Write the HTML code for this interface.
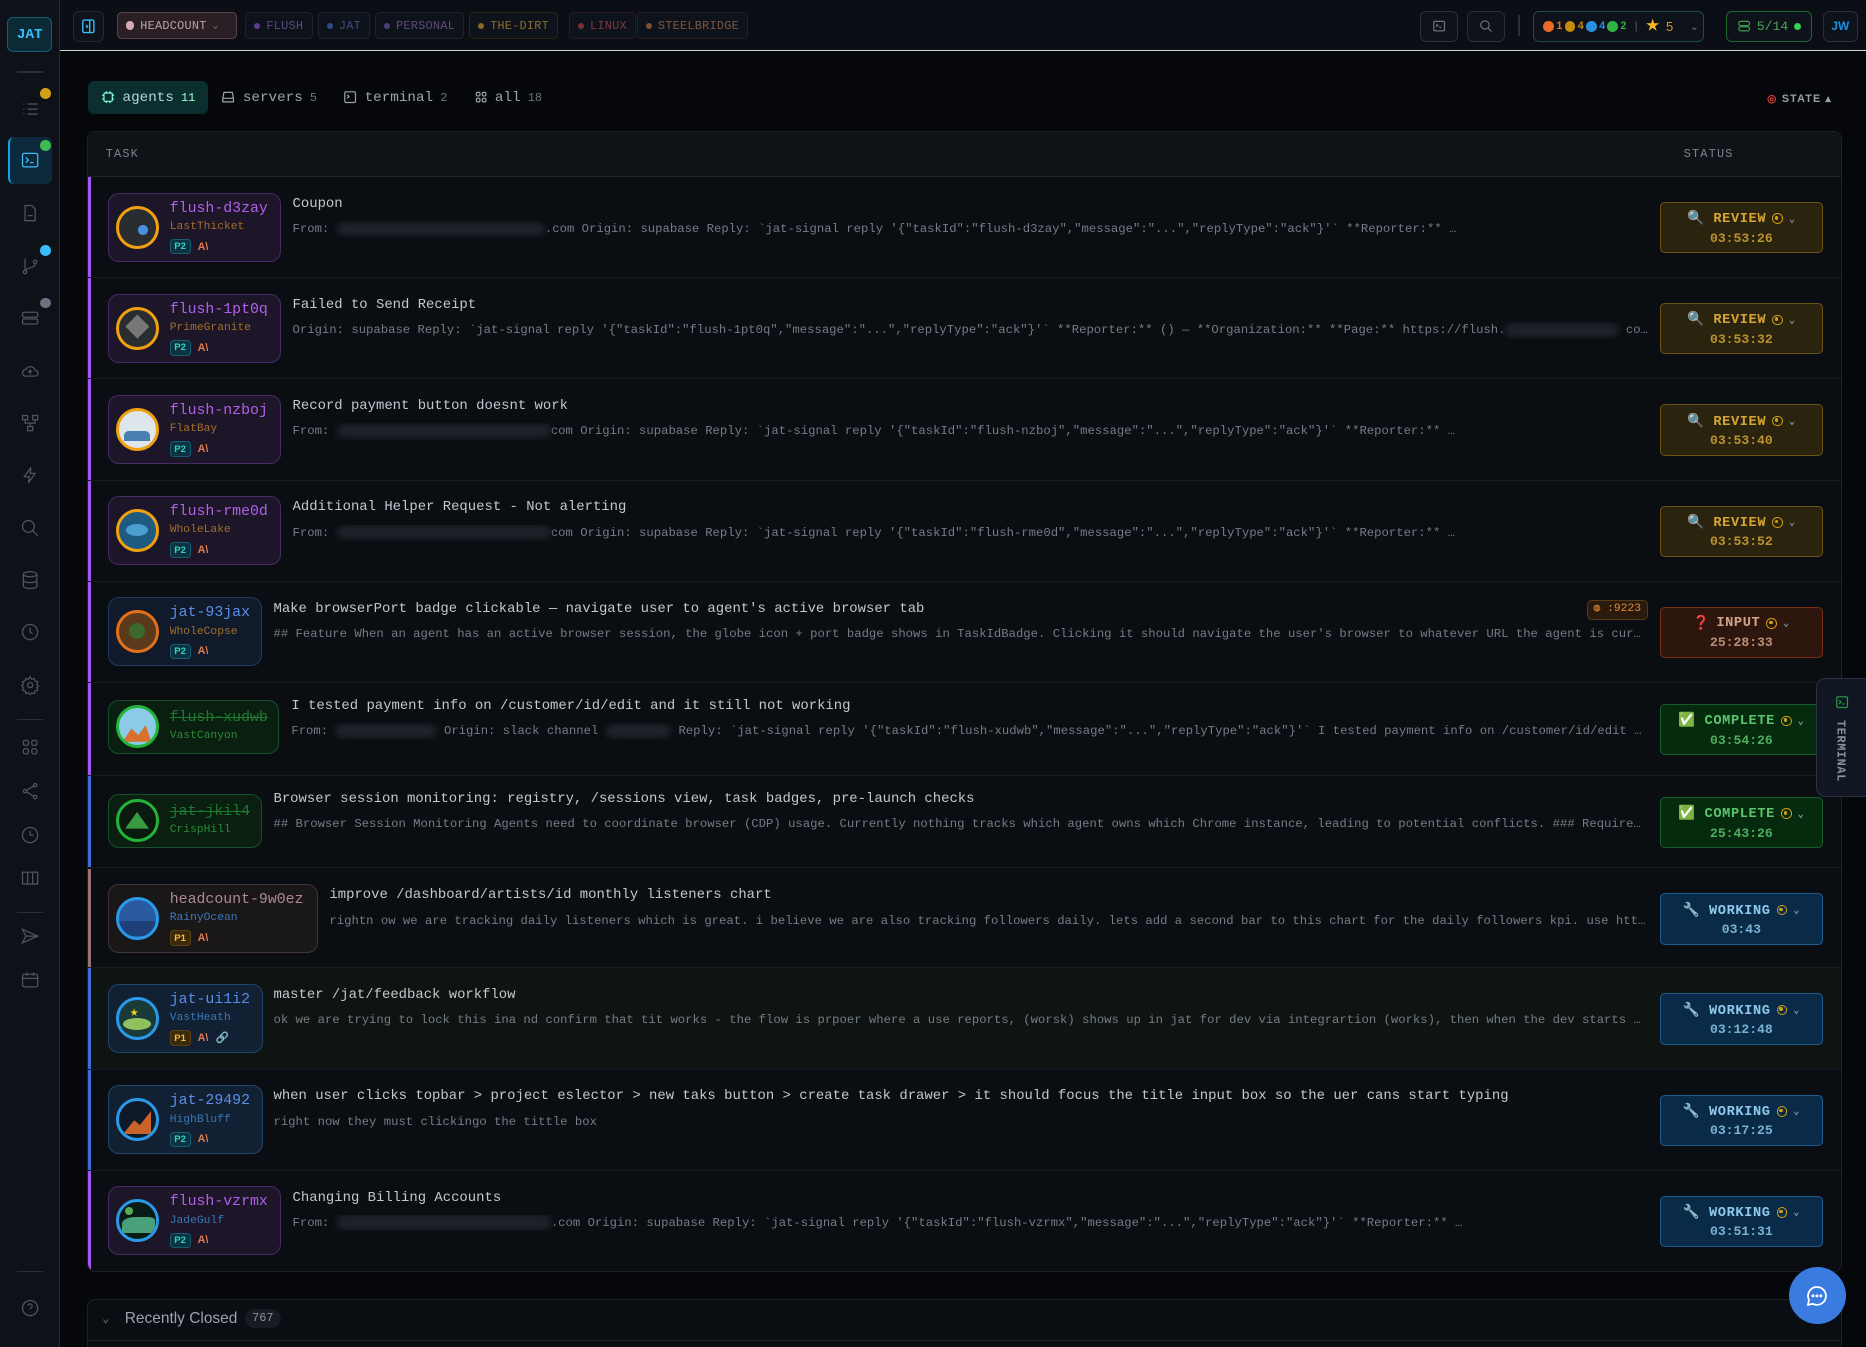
<!DOCTYPE html>
<html><head><meta charset="utf-8">
<style>
*{box-sizing:border-box;margin:0;padding:0}
html,body{width:1866px;height:1347px;overflow:hidden;background:#05070b}
#root{zoom:1.19;width:1568px;height:1132px;position:relative;background:#05070b;font-family:"Liberation Mono",monospace;color:#c9ccd2;overflow:hidden}
.sb{position:absolute;left:0;top:0;width:50px;height:1132px;background:#0e1117;border-right:1px solid #262a31}
.logo{position:absolute;left:6px;top:14px;width:38px;height:30px;border:1px solid #155e75;border-radius:5px;background:#0b2a36;color:#38bdf8;font:bold 12px "Liberation Mono",monospace;display:flex;align-items:center;justify-content:center}
.sbi{position:absolute;left:17px;width:17px;height:17px}
.sbi svg{width:17px;height:17px;stroke:#4b5563;fill:none;stroke-width:1.5}
.dot{position:absolute;width:9px;height:9px;border-radius:50%}
.sep{position:absolute;left:14px;width:22px;height:1px;background:#2a2f38}
.top{position:absolute;left:50px;top:0;right:0;height:43px;background:#0b0e15;border-bottom:1px solid #cfd2d6}
.chip{position:absolute;top:10px;height:23px;border-radius:4px;border:1px solid #1e2330;background:#0e121b;font:10px "Liberation Mono",monospace;display:flex;align-items:center;padding:0 7px;gap:5px;letter-spacing:.2px}
.chip i{width:5px;height:5px;border-radius:50%;display:inline-block}
.ib{position:absolute;top:9px;height:26px;border:1px solid #2a2f38;border-radius:5px;background:#0e121a;display:flex;align-items:center;justify-content:center}
.tabs{position:absolute;left:74px;top:68px;height:28px;display:flex;gap:0;font-size:12px}
.tab{display:flex;align-items:center;gap:6px;padding:0 11px;height:28px;color:#9ca3af;border-radius:5px}
.tab b{font-weight:normal;font-size:10px;color:#6b7280}
.tab.on{background:#0b2e2e;color:#b6d7d6}
.tab.on b{color:#9fc}
.tbl{position:absolute;left:73px;top:110px;width:1475px;height:959px;background:#0a0d12;border:1px solid #1c2027;border-radius:7px;overflow:hidden}
.hdr{height:38px;background:#0f1217;border-bottom:1px solid #1f242b;font-size:10px;color:#7d838c;letter-spacing:1px;position:relative}
.row{position:absolute;left:0;width:1473px;border-bottom:1px solid #161a21}
.stripe{position:absolute;left:0;top:0;bottom:0;width:3px}
.card{position:absolute;left:17px;border-radius:9px;border:1px solid;display:flex;align-items:center;padding:0 8px 0 6px}
.av{width:36px;height:36px;border-radius:50%;border:3px solid;margin-right:9px;flex:none;position:relative;overflow:hidden}
.nm{font-size:12.5px;line-height:16px;white-space:nowrap}
.sub{font-size:9.5px;line-height:13px;margin-top:1px}
.bd{display:flex;gap:6px;margin-top:3px;align-items:center}
.pb{font:bold 8px "Liberation Sans",sans-serif;padding:1px 3px;border-radius:3px}
.p2{background:#0d3340;color:#2dd4bf;border:1px solid #155e75}
.p1{background:#3a2a0a;color:#f5b93b;border:1px solid #5c4212}
.an{color:#e07b4f;font:bold 9px "Liberation Sans",sans-serif}
.txt{position:absolute;right:162px;overflow:hidden}
.t{font-size:11.7px;color:#c4c8ce;white-space:nowrap;line-height:16px}
.d{font-size:10.3px;color:#767c85;white-space:nowrap;overflow:hidden;text-overflow:ellipsis;margin-top:6px;line-height:14px}
.bl{display:inline-block;height:12px;background:#1f2329;border-radius:6px;filter:blur(3px);vertical-align:middle}
.st{position:absolute;right:15px;width:137px;height:43px;border:1px solid;border-radius:4px;text-align:center;font-weight:bold}
.st .l1{font-size:11.5px;margin-top:6px;letter-spacing:.5px;display:flex;align-items:center;justify-content:center;gap:5px}
.st .l2{font-size:11px;margin-top:3px;opacity:.85}
.eye{display:inline-block;width:9px;height:9px;border:1.5px solid #d4a017;border-radius:50%;position:relative}
.eye:after{content:"";position:absolute;left:1.5px;top:1.5px;width:3px;height:3px;background:#d4a017;border-radius:50%}
.chev{font-size:9px;color:#8aa}
.rv{background:#2a230e;border-color:#6b5412;color:#d6a534}
.in{background:#2d160d;border-color:#7a2f14;color:#d4a487}
.cp{background:#052a0e;border-color:#14602a;color:#5cc46c}
.wk{background:#0a2b48;border-color:#1d5b8d;color:#8ec9ec}
</style></head><body><div id="root">

<div class="sb">
 <div class="logo">JAT</div>
 <div class="sep" style="top:60px"></div>
 <div class="sbi" style="top:83px"><svg viewBox="0 0 24 24"><path d="M9 6h12M9 12h12M9 18h12M4 6h1M4 12h1M4 18h1"/></svg></div>
 <div class="dot" style="left:34px;top:74px;background:#d4a017"></div>
 <div style="position:absolute;left:7px;top:115px;width:37px;height:40px;background:#0c2a3c;border-left:2px solid #0ea5e9;border-radius:5px"></div>
 <div class="sbi" style="top:126px"><svg viewBox="0 0 24 24" style="stroke:#38bdf8"><rect x="3" y="4" width="18" height="16" rx="2"/><path d="M7 9l3 3-3 3M12 15h4"/></svg></div>
 <div class="dot" style="left:34px;top:118px;background:#3fb950"></div>
 <div class="sbi" style="top:171px"><svg viewBox="0 0 24 24"><path d="M6 3h8l4 4v14H6z M9 15h6"/></svg></div>
 <div class="sbi" style="top:215px"><svg viewBox="0 0 24 24"><circle cx="6" cy="19" r="2"/><circle cx="18" cy="7" r="2"/><path d="M6 3v14M18 9c0 6-10 4-11 8"/></svg></div>
 <div class="dot" style="left:34px;top:206px;background:#38bdf8"></div>
 <div class="sbi" style="top:259px"><svg viewBox="0 0 24 24"><rect x="3" y="5" width="18" height="6" rx="2"/><rect x="3" y="13" width="18" height="6" rx="2"/></svg></div>
 <div class="dot" style="left:34px;top:250px;background:#6b7280"></div>
 <div class="sbi" style="top:303px"><svg viewBox="0 0 24 24"><path d="M7 18a4 4 0 010-8 6 6 0 0111 1 3.5 3.5 0 010 7z M12 16v-5M10 13l2-2 2 2"/></svg></div>
 <div class="sbi" style="top:347px"><svg viewBox="0 0 24 24"><rect x="3" y="3" width="6" height="5"/><rect x="15" y="3" width="6" height="5"/><rect x="9" y="16" width="6" height="5"/><path d="M6 8v4h12V8M12 12v4"/></svg></div>
 <div class="sbi" style="top:391px"><svg viewBox="0 0 24 24"><path d="M13 3L5 14h6l-1 7 8-11h-6z"/></svg></div>
 <div class="sbi" style="top:435px"><svg viewBox="0 0 24 24"><circle cx="10" cy="10" r="7"/><path d="M15 15l6 6"/></svg></div>
 <div class="sbi" style="top:479px"><svg viewBox="0 0 24 24"><ellipse cx="12" cy="5" rx="8" ry="3"/><path d="M4 5v14c0 2 4 3 8 3s8-1 8-3V5M4 12c0 2 4 3 8 3s8-1 8-3"/></svg></div>
 <div class="sbi" style="top:523px"><svg viewBox="0 0 24 24"><circle cx="12" cy="12" r="9"/><path d="M12 7v5l3 2"/></svg></div>
 <div class="sbi" style="top:567px"><svg viewBox="0 0 24 24"><circle cx="12" cy="12" r="3"/><path d="M12 2l2 3 3-1 1 3 3 1-1 3 2 2-2 2 1 3-3 1-1 3-3-1-2 3-2-3-3 1-1-3-3-1 1-3-2-2 2-2-1-3 3-1 1-3 3 1z"/></svg></div>
 <div class="sep" style="top:604px"></div>
 <div class="sbi" style="top:619px"><svg viewBox="0 0 24 24"><rect x="4" y="4" width="6" height="6" rx="2"/><rect x="14" y="4" width="6" height="6" rx="2"/><rect x="4" y="14" width="6" height="6" rx="2"/><rect x="14" y="14" width="6" height="6" rx="2"/></svg></div>
 <div class="sbi" style="top:656px"><svg viewBox="0 0 24 24"><circle cx="18" cy="5" r="2"/><circle cx="6" cy="12" r="2"/><circle cx="18" cy="19" r="2"/><path d="M8 11l8-5M8 13l8 5"/></svg></div>
 <div class="sbi" style="top:693px"><svg viewBox="0 0 24 24"><circle cx="12" cy="12" r="9"/><path d="M12 7v5h4"/></svg></div>
 <div class="sbi" style="top:729px"><svg viewBox="0 0 24 24"><rect x="3" y="5" width="18" height="14"/><path d="M9 5v14M15 5v14"/></svg></div>
 <div class="sep" style="top:766px"></div>
 <div class="sbi" style="top:778px"><svg viewBox="0 0 24 24"><path d="M3 4l18 8-18 8 4-8z M7 12h14"/></svg></div>
 <div class="sbi" style="top:815px"><svg viewBox="0 0 24 24"><rect x="3" y="5" width="18" height="15" rx="2"/><path d="M3 10h18M8 3v4M16 3v4"/></svg></div>
 <div class="sep" style="top:1068px"></div>
 <div class="sbi" style="top:1091px"><svg viewBox="0 0 24 24"><circle cx="12" cy="12" r="9"/><path d="M9.5 9.5a2.5 2.5 0 115 0c0 2-2.5 2-2.5 4M12 17v.5"/></svg></div>
</div>

<div class="top">
 <div class="ib" style="left:11px;width:26px;border-color:#1f2937"><svg width="14" height="14" viewBox="0 0 24 24" fill="none" stroke="#38bdf8" stroke-width="2"><rect x="4" y="3" width="16" height="18" rx="2"/><path d="M14 3v18M9 10l2 2-2 2"/></svg></div>
 <div class="chip" style="left:48px;width:101px;background:#2a1f25;border-color:#5a434b;color:#bba0a8"><i style="background:#d8a8b6;width:7px;height:7px"></i>HEADCOUNT <span style="color:#8a7a80;font-size:8px">⌄</span></div>
 <div class="chip" style="left:156px;color:#5d4a7a"><i style="background:#5b3f8c"></i>FLUSH</div>
 <div class="chip" style="left:217px;color:#3e4f78"><i style="background:#2f4a8a"></i>JAT</div>
 <div class="chip" style="left:265px;color:#5c4a78"><i style="background:#4e3d7a"></i>PERSONAL</div>
 <div class="chip" style="left:344px;color:#8a6a30;border-color:#2b2417"><i style="background:#8a6a20"></i>THE-DIRT</div>
 <div class="chip" style="left:428px;color:#7a3a3e;border-color:#2a1a1f"><i style="background:#7a2f34"></i>LINUX</div>
 <div class="chip" style="left:485px;color:#80553e;border-color:#2a1f1a"><i style="background:#7a5030"></i>STEELBRIDGE</div>
 <div class="ib" style="left:1143px;width:32px"><svg width="12" height="12" viewBox="0 0 24 24" fill="none" stroke="#6b7280" stroke-width="2"><rect x="3" y="4" width="18" height="16" rx="2"/><path d="M7 9l3 2-3 2M12 14h4"/></svg></div>
 <div class="ib" style="left:1183px;width:32px"><svg width="12" height="12" viewBox="0 0 24 24" fill="none" stroke="#6b7280" stroke-width="2"><circle cx="10" cy="10" r="7"/><path d="M15 15l6 6"/></svg></div>
 <div style="position:absolute;left:1226px;top:13px;width:1px;height:17px;background:#2a2f38"></div>
 <div class="ib" style="left:1238px;width:144px;border-color:#1b4b4a;justify-content:flex-start;padding-left:8px;gap:2px;font:bold 9px 'Liberation Sans',sans-serif">
  <i style="width:9px;height:9px;border-radius:50%;background:#ea6a26"></i><span style="color:#ea6a26">1</span>
  <i style="width:9px;height:9px;border-radius:50%;background:#c98b0a"></i><span style="color:#c98b0a">4</span>
  <i style="width:9px;height:9px;border-radius:50%;background:#2b8fe0"></i><span style="color:#2b8fe0">4</span>
  <i style="width:9px;height:9px;border-radius:50%;background:#2fb344"></i><span style="color:#2fb344">2</span>
  <span style="color:#444;margin:0 5px">|</span><span style="color:#f5b820;font-size:12px">★</span><span style="color:#d49a20;font-size:11px;margin-left:4px;font-weight:normal">5</span><span style="color:#6b7280;margin-left:12px;font-weight:normal">⌄</span></div>
 <div class="ib" style="left:1400px;width:73px;border-color:#1a6b2a;color:#4ba35a;font-size:11px;gap:5px"><svg width="12" height="12" viewBox="0 0 24 24" fill="none" stroke="#3c9a4c" stroke-width="2"><rect x="3" y="4" width="18" height="7" rx="3"/><rect x="3" y="13" width="18" height="7" rx="3"/></svg>5/14<i style="width:6px;height:6px;border-radius:50%;background:#3fcf50"></i></div>
 <div class="ib" style="left:1482px;width:29px;color:#1e90e0;font:bold 10px 'Liberation Sans',sans-serif">JW</div>
</div>

<div class="tabs">
 <div class="tab on"><svg width="12" height="12" viewBox="0 0 24 24" fill="none" stroke="#8fd" stroke-width="2"><rect x="5" y="5" width="14" height="14" rx="2"/><path d="M9 2v3M15 2v3M9 19v3M15 19v3M2 9h3M2 15h3M19 9h3M19 15h3"/></svg>agents <b>11</b></div>
 <div class="tab"><svg width="12" height="12" viewBox="0 0 24 24" fill="none" stroke="#9ca3af" stroke-width="2"><path d="M5 4h14l2 10v6H3v-6z M3 14h18"/></svg>servers <b>5</b></div>
 <div class="tab"><svg width="12" height="12" viewBox="0 0 24 24" fill="none" stroke="#9ca3af" stroke-width="2"><rect x="3" y="3" width="18" height="18" rx="2"/><path d="M7 8l3 3-3 3"/></svg>terminal <b>2</b></div>
 <div class="tab"><svg width="12" height="12" viewBox="0 0 24 24" fill="none" stroke="#9ca3af" stroke-width="2"><rect x="4" y="4" width="6" height="6" rx="2"/><rect x="14" y="4" width="6" height="6" rx="2"/><rect x="4" y="14" width="6" height="6" rx="2"/><rect x="14" y="14" width="6" height="6" rx="2"/></svg>all <b>18</b></div>
</div>
<div style="position:absolute;left:1485px;top:77px;font:bold 9px 'Liberation Sans',sans-serif;color:#9aa0a8;letter-spacing:1px"><span style="color:#e0413a">◎</span> STATE ▴</div>

<div class="tbl">
 <div class="hdr"><span style="position:absolute;left:15px;top:13px">TASK</span><span style="position:absolute;left:1341px;top:13px">STATUS</span></div>

 <div class="row" style="top:38px;height:85px">
  <div class="stripe" style="background:#a855f7"></div>
  <div class="card" style="top:13px;height:58px;width:145px;background:#1d1528;border-color:#472a66">
   <div class="av" style="border-color:#f0a010;background:#2a2d30"><div style="position:absolute;left:16px;top:14px;width:8px;height:8px;border-radius:50%;background:#4a90e2"></div></div>
   <div><div class="nm" style="color:#b060e8">flush-d3zay</div><div class="sub" style="color:#a07028">LastThicket</div><div class="bd"><span class="pb p2">P2</span><span class="an">A\</span></div></div>
  </div>
  <div class="txt" style="left:172px;top:15px"><div class="t">Coupon</div><div class="d">From: <span class="bl" style="width:175px"></span>.com Origin: supabase Reply: `jat-signal reply '{"taskId":"flush-d3zay","message":"...","replyType":"ack"}'` **Reporter:** <span class="bl" style="width:180px"></span></div></div>
  <div class="st rv" style="top:21px"><div class="l1">🔍 REVIEW <span class="eye"></span><span class="chev">⌄</span></div><div class="l2">03:53:26</div></div>
 </div>
 <div class="row" style="top:123px;height:85px">
  <div class="stripe" style="background:#a855f7"></div>
  <div class="card" style="top:13px;height:58px;width:145px;background:#1d1528;border-color:#472a66">
   <div class="av" style="border-color:#f0a010;background:#2a2d30"><div style="position:absolute;left:8px;top:7px;width:14px;height:14px;background:#777;transform:rotate(45deg)"></div></div>
   <div><div class="nm" style="color:#b060e8">flush-1pt0q</div><div class="sub" style="color:#a07028">PrimeGranite</div><div class="bd"><span class="pb p2">P2</span><span class="an">A\</span></div></div>
  </div>
  <div class="txt" style="left:172px;top:15px"><div class="t">Failed to Send Receipt</div><div class="d">Origin: supabase Reply: `jat-signal reply '{"taskId":"flush-1pt0q","message":"...","replyType":"ack"}'` **Reporter:** () — **Organization:** **Page:** https://flush.<span class="bl" style="width:95px"></span> com…</div></div>
  <div class="st rv" style="top:21px"><div class="l1">🔍 REVIEW <span class="eye"></span><span class="chev">⌄</span></div><div class="l2">03:53:32</div></div>
 </div>
 <div class="row" style="top:208px;height:85px">
  <div class="stripe" style="background:#a855f7"></div>
  <div class="card" style="top:13px;height:58px;width:145px;background:#1d1528;border-color:#472a66">
   <div class="av" style="border-color:#f0a010;background:#dde6ea"><div style="position:absolute;left:4px;top:17px;width:22px;height:8px;background:#4a80b0;border-radius:4px 4px 0 0"></div></div>
   <div><div class="nm" style="color:#b060e8">flush-nzboj</div><div class="sub" style="color:#a07028">FlatBay</div><div class="bd"><span class="pb p2">P2</span><span class="an">A\</span></div></div>
  </div>
  <div class="txt" style="left:172px;top:15px"><div class="t">Record payment button doesnt work</div><div class="d">From: <span class="bl" style="width:180px"></span>com Origin: supabase Reply: `jat-signal reply '{"taskId":"flush-nzboj","message":"...","replyType":"ack"}'` **Reporter:** <span class="bl" style="width:180px"></span></div></div>
  <div class="st rv" style="top:21px"><div class="l1">🔍 REVIEW <span class="eye"></span><span class="chev">⌄</span></div><div class="l2">03:53:40</div></div>
 </div>
 <div class="row" style="top:293px;height:85px">
  <div class="stripe" style="background:#a855f7"></div>
  <div class="card" style="top:13px;height:58px;width:145px;background:#1d1528;border-color:#472a66">
   <div class="av" style="border-color:#f0a010;background:#1f5a80"><div style="position:absolute;left:6px;top:10px;width:18px;height:10px;border-radius:50%;background:#4a9ed0"></div></div>
   <div><div class="nm" style="color:#b060e8">flush-rme0d</div><div class="sub" style="color:#a07028">WholeLake</div><div class="bd"><span class="pb p2">P2</span><span class="an">A\</span></div></div>
  </div>
  <div class="txt" style="left:172px;top:15px"><div class="t">Additional Helper Request - Not alerting</div><div class="d">From: <span class="bl" style="width:180px"></span>com Origin: supabase Reply: `jat-signal reply '{"taskId":"flush-rme0d","message":"...","replyType":"ack"}'` **Reporter:** <span class="bl" style="width:180px"></span></div></div>
  <div class="st rv" style="top:21px"><div class="l1">🔍 REVIEW <span class="eye"></span><span class="chev">⌄</span></div><div class="l2">03:53:52</div></div>
 </div>
 <div class="row" style="top:378px;height:85px">
  <div class="stripe" style="background:#a855f7"></div>
  <div class="card" style="top:13px;height:58px;width:129px;background:#111a2a;border-color:#213a5e">
   <div class="av" style="border-color:#e0701a;background:#5a3a1a"><div style="position:absolute;left:8px;top:8px;width:14px;height:14px;border-radius:50%;background:#3c6a2a"></div></div>
   <div><div class="nm" style="color:#5a8ee8">jat-93jax</div><div class="sub" style="color:#a07028">WholeCopse</div><div class="bd"><span class="pb p2">P2</span><span class="an">A\</span></div></div>
  </div>
  <div class="txt" style="left:156px;top:15px;right:162px"><div class="t">Make browserPort badge clickable — navigate user to agent's active browser tab</div><div class="d">## Feature When an agent has an active browser session, the globe icon + port badge shows in TaskIdBadge. Clicking it should navigate the user's browser to whatever URL the agent is currently on</div></div>
  <div style="position:absolute;right:162px;top:15px;height:17px;padding:0 5px;border:1px solid #5a3a14;background:#2a1a0c;border-radius:4px;color:#e08a3a;font-size:9.5px;line-height:15px">◍ :9223</div>
  <div class="st in" style="top:21px"><div class="l1"><span style="color:#d33">❓</span> INPUT <span class="eye"></span><span class="chev">⌄</span></div><div class="l2">25:28:33</div></div>
 </div>
 <div class="row" style="top:463px;height:78px">
  <div class="stripe" style="background:#a855f7"></div>
  <div class="card" style="top:14px;height:46px;width:144px;background:#0a1f10;border-color:#17502a">
   <div class="av" style="border-color:#22b33a;background:#8ccae8"><div style="position:absolute;left:3px;top:14px;width:24px;height:14px;background:#d87030;clip-path:polygon(0 100%,30% 20%,55% 60%,80% 0,100% 100%)"></div></div>
   <div><div class="nm" style="color:#1c7a30;text-decoration:line-through">flush-xudwb</div><div class="sub" style="color:#2a8a3a">VastCanyon</div></div>
  </div>
  <div class="txt" style="left:171px;top:12px"><div class="t">I tested payment info on /customer/id/edit and it still not working</div><div class="d">From: <span class="bl" style="width:85px"></span> Origin: slack channel <span class="bl" style="width:55px"></span> Reply: `jat-signal reply '{"taskId":"flush-xudwb","message":"...","replyType":"ack"}'` I tested payment info on /customer/id/edit and it still not working</div></div>
  <div class="st cp" style="top:18px"><div class="l1">✅ COMPLETE <span class="eye"></span><span class="chev">⌄</span></div><div class="l2">03:54:26</div></div>
 </div>
 <div class="row" style="top:541px;height:78px">
  <div class="stripe" style="background:#3b6fd8"></div>
  <div class="card" style="top:15px;height:46px;width:129px;background:#0a1f10;border-color:#17502a">
   <div class="av" style="border-color:#22b33a;background:#0a1a0e"><div style="position:absolute;left:5px;top:8px;width:20px;height:14px;background:#3a9a40;clip-path:polygon(50% 0,100% 100%,0 100%)"></div></div>
   <div><div class="nm" style="color:#1c7a30;text-decoration:line-through">jat-jkil4</div><div class="sub" style="color:#2a8a3a">CrispHill</div></div>
  </div>
  <div class="txt" style="left:156px;top:12px"><div class="t">Browser session monitoring: registry, /sessions view, task badges, pre-launch checks</div><div class="d">## Browser Session Monitoring Agents need to coordinate browser (CDP) usage. Currently nothing tracks which agent owns which Chrome instance, leading to potential conflicts. ### Requirements</div></div>
  <div class="st cp" style="top:18px"><div class="l1">✅ COMPLETE <span class="eye"></span><span class="chev">⌄</span></div><div class="l2">25:43:26</div></div>
 </div>
 <div class="row" style="top:619px;height:84px">
  <div class="stripe" style="background:#9a7276"></div>
  <div class="card" style="top:13px;height:58px;width:176px;background:#1a1719;border-color:#433639">
   <div class="av" style="border-color:#2a9ae8;background:#2a5aa0"><div style="position:absolute;left:0;top:18px;width:30px;height:12px;background:#1e3f78"></div></div>
   <div><div class="nm" style="color:#b08893">headcount-9w0ez</div><div class="sub" style="color:#3a78b8">RainyOcean</div><div class="bd"><span class="pb p1">P1</span><span class="an">A\</span></div></div>
  </div>
  <div class="txt" style="left:203px;top:15px"><div class="t">improve /dashboard/artists/id monthly listeners chart</div><div class="d">rightn ow we are tracking daily listeners which is great. i believe we are also tracking followers daily. lets add a second bar to this chart for the daily followers kpi. use https://...</div></div>
  <div class="st wk" style="top:21px"><div class="l1">🔧 WORKING <span class="eye"></span><span class="chev">⌄</span></div><div class="l2">03:43</div></div>
 </div>
 <div class="row" style="top:703px;height:85px;background:#0d1412">
  <div class="stripe" style="background:#3b6fd8"></div>
  <div class="card" style="top:13px;height:58px;width:130px;background:#112033;border-color:#23446a">
   <div class="av" style="border-color:#2a9ae8;background:#1a3a3a"><div style="position:absolute;left:3px;top:15px;width:24px;height:10px;border-radius:50%;background:#90c060"></div><div style="position:absolute;left:9px;top:5px;color:#f5d020;font-size:12px;line-height:12px">★</div></div>
   <div><div class="nm" style="color:#5a8ee8">jat-ui1i2</div><div class="sub" style="color:#3a78b8">VastHeath</div><div class="bd"><span class="pb p1">P1</span><span class="an">A\</span><span style="color:#3a9a40;font-size:9px">🔗</span></div></div>
  </div>
  <div class="txt" style="left:156px;top:15px"><div class="t">master /jat/feedback workflow</div><div class="d">ok we are trying to lock this ina nd confirm that tit works - the flow is prpoer where a use reports, (worsk) shows up in jat for dev via integrartion (works), then when the dev starts work...</div></div>
  <div class="st wk" style="top:21px"><div class="l1">🔧 WORKING <span class="eye"></span><span class="chev">⌄</span></div><div class="l2">03:12:48</div></div>
 </div>
 <div class="row" style="top:788px;height:85px">
  <div class="stripe" style="background:#3b6fd8"></div>
  <div class="card" style="top:13px;height:58px;width:130px;background:#112033;border-color:#23446a">
   <div class="av" style="border-color:#2a9ae8;background:#0e1a2a"><div style="position:absolute;left:3px;top:8px;width:24px;height:20px;background:#c8642a;clip-path:polygon(0 100%,40% 40%,60% 60%,100% 0,100% 100%)"></div></div>
   <div><div class="nm" style="color:#5a8ee8">jat-29492</div><div class="sub" style="color:#3a78b8">HighBluff</div><div class="bd"><span class="pb p2">P2</span><span class="an">A\</span></div></div>
  </div>
  <div class="txt" style="left:156px;top:15px"><div class="t">when user clicks topbar &gt; project eslector &gt; new taks button &gt; create task drawer &gt; it should focus the title input box so the uer cans start typing</div><div class="d">right now they must clickingo the tittle box</div></div>
  <div class="st wk" style="top:21px"><div class="l1">🔧 WORKING <span class="eye"></span><span class="chev">⌄</span></div><div class="l2">03:17:25</div></div>
 </div>
 <div class="row" style="top:873px;height:85px;border-bottom:none">
  <div class="stripe" style="background:#a855f7"></div>
  <div class="card" style="top:13px;height:58px;width:145px;background:#1d1528;border-color:#472a66">
   <div class="av" style="border-color:#2a9ae8;background:#0a1a14"><div style="position:absolute;left:2px;top:12px;width:28px;height:14px;background:#4aa07a;border-radius:40% 20% 0 0"></div><div style="position:absolute;left:5px;top:4px;width:7px;height:7px;border-radius:50%;background:#5aaa5a"></div></div>
   <div><div class="nm" style="color:#b060e8">flush-vzrmx</div><div class="sub" style="color:#3a78b8">JadeGulf</div><div class="bd"><span class="pb p2">P2</span><span class="an">A\</span></div></div>
  </div>
  <div class="txt" style="left:172px;top:15px"><div class="t">Changing Billing Accounts</div><div class="d">From: <span class="bl" style="width:180px"></span>.com Origin: supabase Reply: `jat-signal reply '{"taskId":"flush-vzrmx","message":"...","replyType":"ack"}'` **Reporter:** <span class="bl" style="width:180px"></span></div></div>
  <div class="st wk" style="top:21px"><div class="l1">🔧 WORKING <span class="eye"></span><span class="chev">⌄</span></div><div class="l2">03:51:31</div></div>
 </div>
</div>

<div style="position:absolute;left:73px;top:1092px;width:1475px;height:50px;background:#0a0d12;border:1px solid #1c2027;border-radius:7px">
 <div style="position:absolute;left:0;right:0;top:33px;height:1px;background:#1c2027"></div>
 <span style="position:absolute;left:12px;top:9px;color:#6b7280;font-size:10px">⌄</span>
 <span style="position:absolute;left:31px;top:8px;color:#9ca3af;font:13px 'Liberation Sans',sans-serif">Recently Closed</span>
 <span style="position:absolute;left:132px;top:7px;background:#161b24;color:#8a9098;font-size:10px;padding:2px 6px;border-radius:8px">767</span>
</div>

<div style="position:absolute;left:1526px;top:570px;width:46px;height:100px;background:#111722;border:1px solid #2a3140;border-radius:8px 0 0 8px">
 <svg style="position:absolute;left:15px;top:13px" width="12" height="12" viewBox="0 0 24 24" fill="none" stroke="#2a9a4a" stroke-width="2"><rect x="3" y="3" width="18" height="18" rx="2"/><path d="M7 9l3 3-3 3M12 15h4"/></svg>
 <div style="position:absolute;left:14px;top:34px;writing-mode:vertical-rl;font:bold 10px 'Liberation Mono',monospace;color:#8a929e;letter-spacing:.5px">TERMINAL</div>
</div>

<div style="position:absolute;left:1503px;top:1065px;width:48px;height:48px;border-radius:50%;background:#3a7be0;display:flex;align-items:center;justify-content:center">
 <svg width="20" height="20" viewBox="0 0 24 24" fill="none" stroke="#fff" stroke-width="1.8"><path d="M12 3a9 9 0 00-8 13l-1 5 5-1a9 9 0 104-17z"/><circle cx="8" cy="12" r=".6" fill="#fff"/><circle cx="12" cy="12" r=".6" fill="#fff"/><circle cx="16" cy="12" r=".6" fill="#fff"/></svg>
</div>

</div></body></html>
